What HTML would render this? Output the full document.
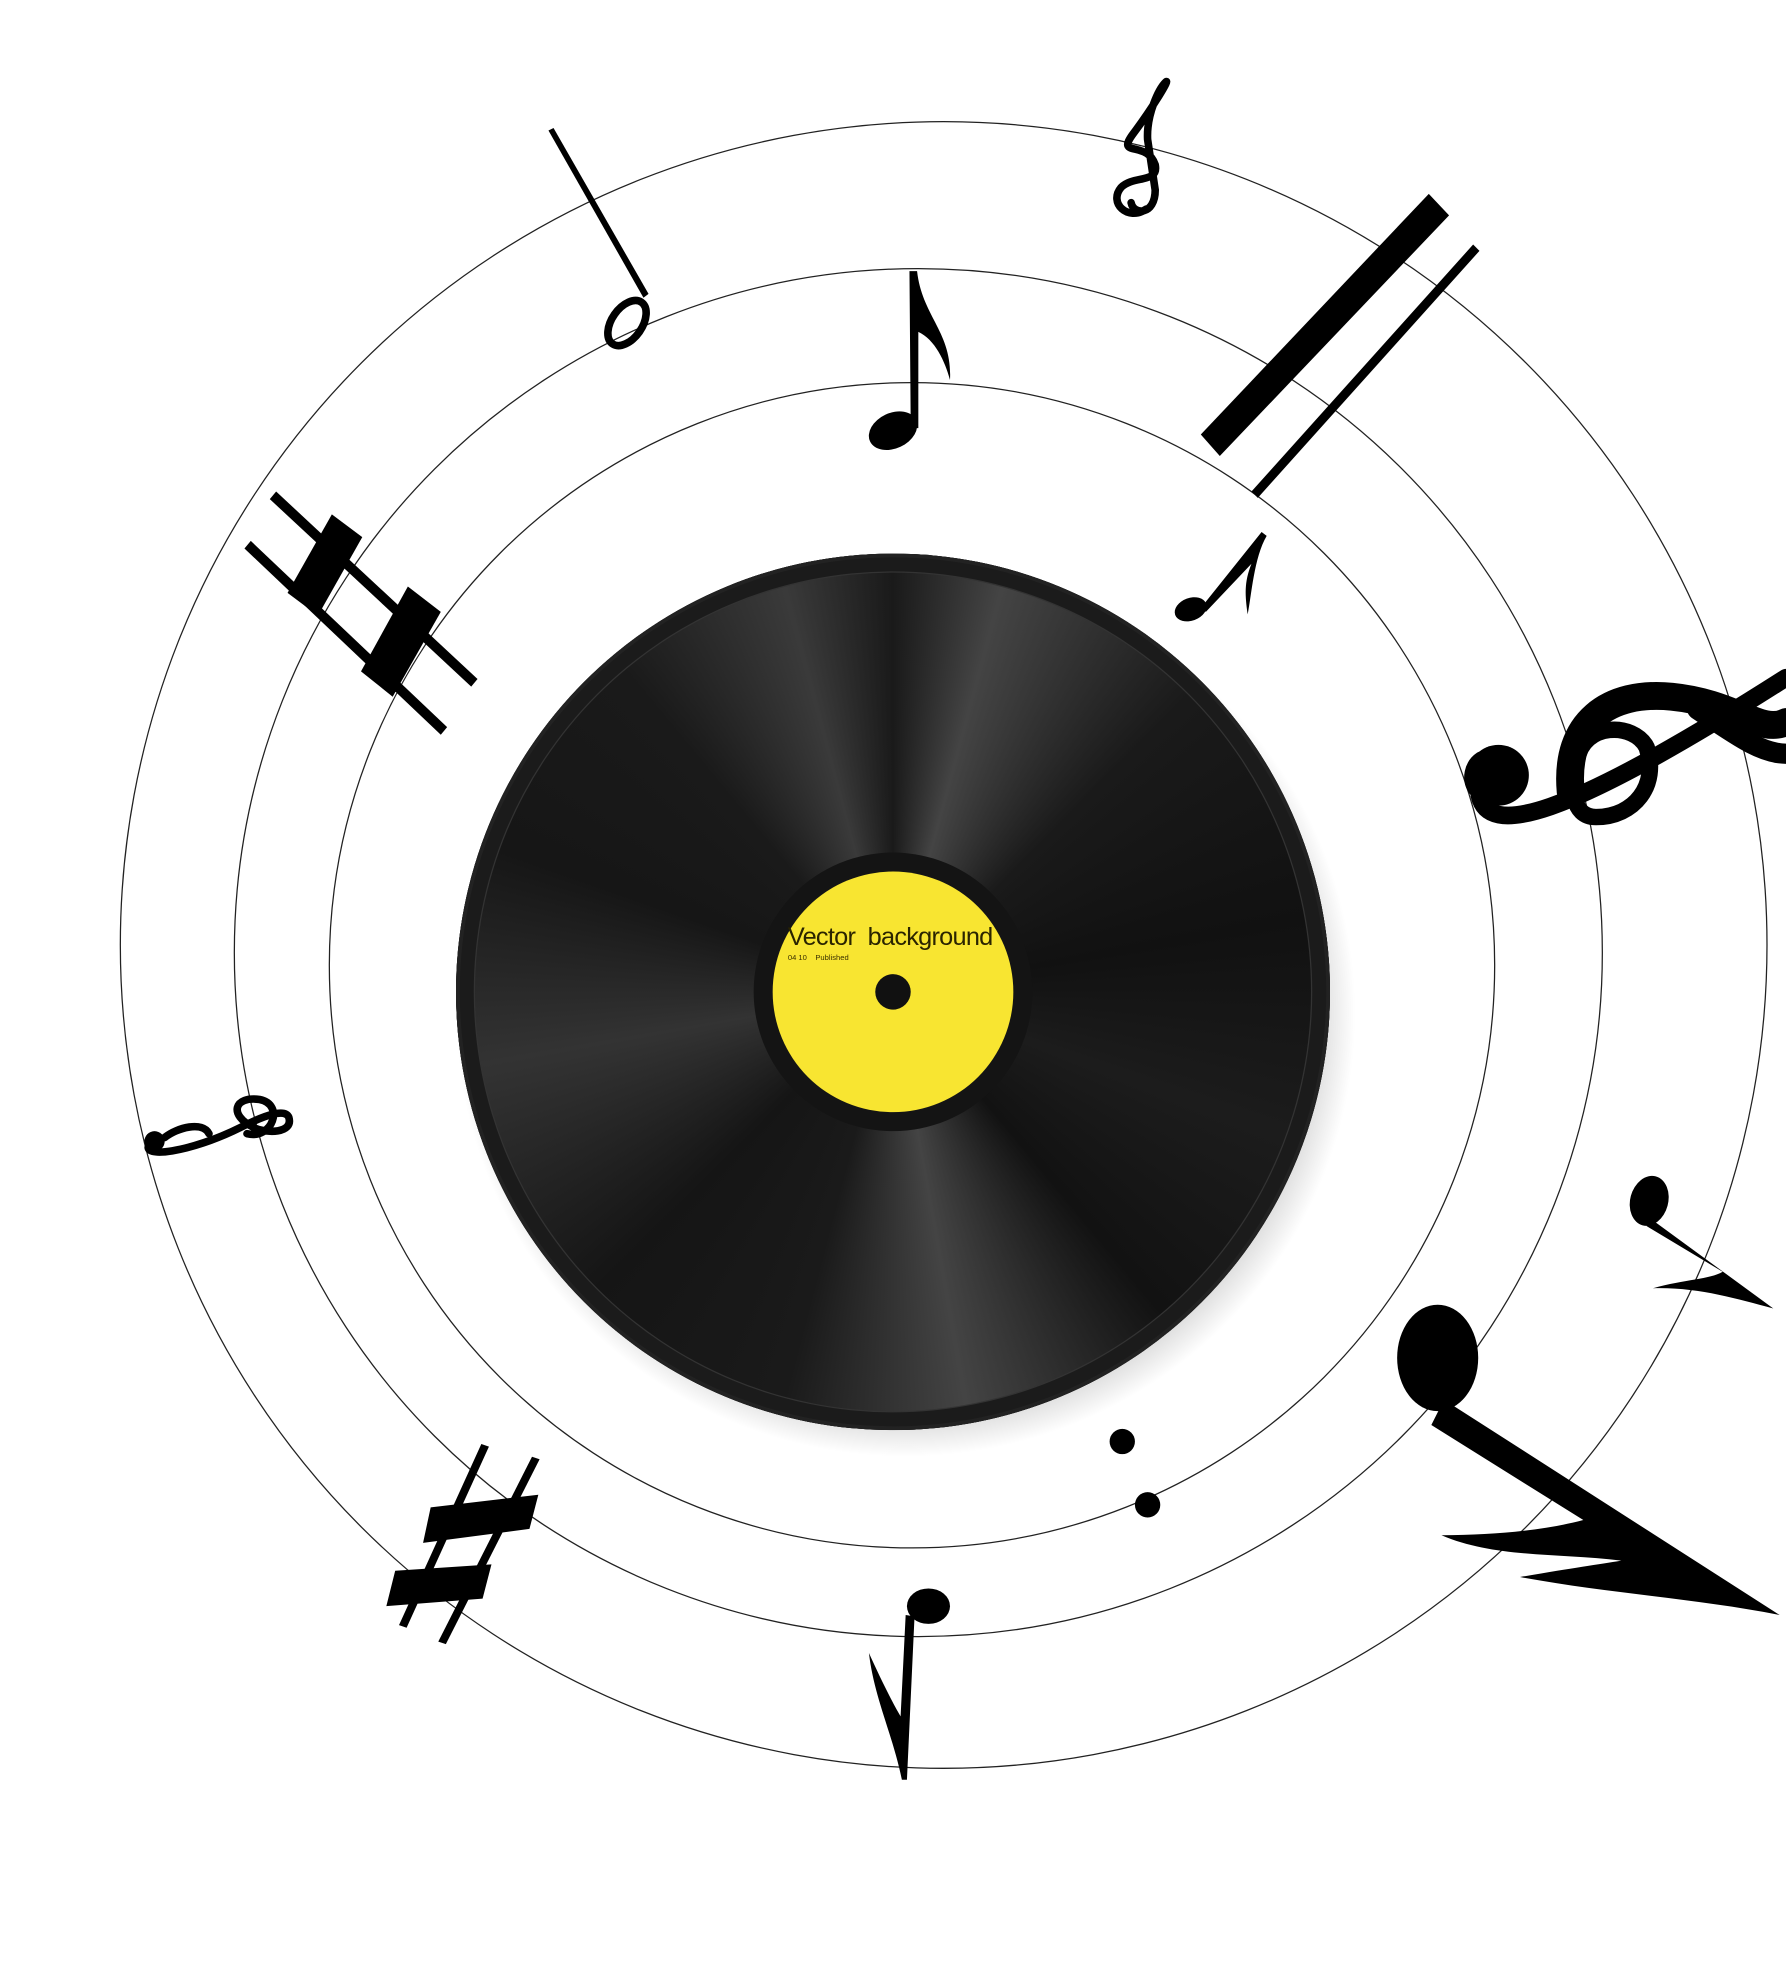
<!DOCTYPE html>
<html><head><meta charset="utf-8"><style>
html,body{margin:0;padding:0;background:#fff;width:1786px;height:1987px;overflow:hidden}
svg{display:block}
</style></head><body>
<svg width="1786" height="1987" viewBox="0 0 1410 1568.6" xmlns="http://www.w3.org/2000/svg">
<defs>
<radialGradient id="sh" cx="50%" cy="50%" r="50%">
<stop offset="0.85" stop-color="#000" stop-opacity="0.25"/>
<stop offset="1" stop-color="#000" stop-opacity="0"/>
</radialGradient>
</defs>
<g fill="none" stroke="#222" stroke-width="1">
<circle cx="745" cy="746" r="650"/>
<circle cx="725" cy="752" r="540"/>
<circle cx="720" cy="762" r="460"/>
</g>
<ellipse cx="715" cy="800" rx="355" ry="350" fill="url(#sh)"/>
<foreignObject x="360" y="437" width="690" height="692">
<div xmlns="http://www.w3.org/1999/xhtml" style="width:690px;height:692px;border-radius:50%;position:relative;background:conic-gradient(from 0deg,#1a1a1a 0deg,#444 15deg,#1a1a1a 45deg,#111 80deg,#1c1c1c 110deg,#121212 140deg,#444 170deg,#1a1a1a 195deg,#151515 225deg,#333 260deg,#161616 290deg,#1a1a1a 320deg,#3a3a3a 345deg,#1a1a1a 360deg);box-shadow:inset 0 0 0 3px #222,inset 0 0 0 14px #1b1b1b,inset 0 0 0 15px #333">
<div style="position:absolute;left:235px;top:236px;width:220px;height:220px;border-radius:50%;background:#141414"></div>
<div style="position:absolute;left:250px;top:251px;width:190px;height:190px;border-radius:50%;background:#f8e531"></div>
<div style="position:absolute;left:331px;top:332px;width:28px;height:28px;border-radius:50%;background:#111"></div>
<div style="position:absolute;left:262px;top:292px;font:20px 'Liberation Sans',sans-serif;color:#2a2400;letter-spacing:-0.6px;white-space:nowrap">Vector&nbsp; background</div>
<div style="position:absolute;left:262px;top:317px;font:6px 'Liberation Sans',sans-serif;color:#3a3000;white-space:nowrap">04 10&nbsp;&nbsp;&nbsp; Published</div>
</div>
</foreignObject>
<g fill="#000" stroke="none">
<path d="M433 103 L437 101 L512 232 L508 235 Z"/>
<ellipse cx="495" cy="255" rx="12" ry="20" transform="rotate(35 495 255)" fill="none" stroke="#000" stroke-width="6"/>
<ellipse cx="705" cy="340" rx="20" ry="14" transform="rotate(-25 705 340)"/>
<path d="M719 338 L718 214 L724 214 C728 250 752 262 750 300 C746 285 738 268 725 262 L725 338 Z"/>
<g fill="none" stroke="#000" stroke-width="6" stroke-linecap="round">
<path d="M905 165 C890 175 875 160 885 148 C895 138 915 145 912 130 C905 110 880 125 895 105 C910 85 925 60 920 65 C915 70 905 90 906 110 L912 150 C912 170 895 170 893 160"/>
</g>
<path d="M948 343 L1128 153 L1144 170 L963 360 Z"/>
<path d="M988 388 L1163 193 L1168 198 L993 393 Z"/>
<ellipse cx="940" cy="481" rx="13" ry="9" transform="rotate(-20 940 481)"/>
<path d="M948 480 L996 420 L1000 423 C990 440 988 470 985 485 C983 470 982 460 988 445 L952 483 Z"/>
<path d="M218 388 L377 536 L372 542 L213 394 Z"/>
<path d="M198 427 L353 574 L348 580 L193 433 Z"/>
<path d="M227 468 L262 406 L286 424 L251 486 Z"/>
<path d="M285 530 L322 463 L348 483 L310 550 Z"/>
<g fill="none" stroke="#000" stroke-linecap="round">
<path d="M1190 620 C1165 640 1155 610 1170 600 M1168 628 C1175 660 1230 650 1410 535" stroke-width="14"/>
<path d="M1240 625 C1235 570 1270 545 1320 550 C1370 555 1390 580 1410 570" stroke-width="22"/>
<path d="M1245 600 C1250 570 1290 570 1300 590 C1310 620 1290 645 1260 645 C1240 645 1240 620 1245 600" stroke-width="13"/>
<path d="M1340 560 C1370 580 1390 595 1410 595" stroke-width="16"/>
</g>
<circle cx="1183" cy="612" r="24"/>
<g fill="none" stroke="#000" stroke-width="6" stroke-linecap="round">
<path d="M118 903 C110 915 150 910 190 890 C210 880 225 875 228 882 C232 895 210 895 200 890 C180 880 185 865 205 868 C225 872 215 900 195 895"/>
<path d="M130 898 C140 890 160 885 165 895"/>
</g>
<circle cx="122" cy="901" r="8"/>
<path d="M380 1140 L386 1142 L321 1285 L315 1283 Z"/>
<path d="M420 1150 L426 1152 L352 1298 L346 1296 Z"/>
<path d="M340 1190 L425 1180 L418 1207 L334 1218 Z"/>
<path d="M312 1240 L388 1235 L381 1262 L305 1268 Z"/>
<ellipse cx="733" cy="1268" rx="17" ry="14"/>
<path d="M715 1275 L722 1276 L716 1405 L712 1405 C705 1370 690 1340 686 1305 C695 1325 705 1345 711 1355 Z"/>
<circle cx="886" cy="1138" r="10"/>
<circle cx="906" cy="1188" r="10"/>
<ellipse cx="1302" cy="948" rx="15" ry="20" transform="rotate(15 1302 948)"/>
<path d="M1303 962 L1400 1033 C1370 1025 1340 1016 1305 1017 C1330 1010 1350 1010 1360 1004 L1300 968 Z"/>
<ellipse cx="1135" cy="1072" rx="32" ry="42"/>
<path d="M1140 1105 L1405 1275 C1340 1262 1270 1258 1200 1245 C1240 1238 1262 1235 1280 1232 C1230 1226 1180 1230 1138 1212 C1180 1212 1220 1208 1250 1200 L1130 1125 Z"/>
</g>
</svg>
</body></html>
